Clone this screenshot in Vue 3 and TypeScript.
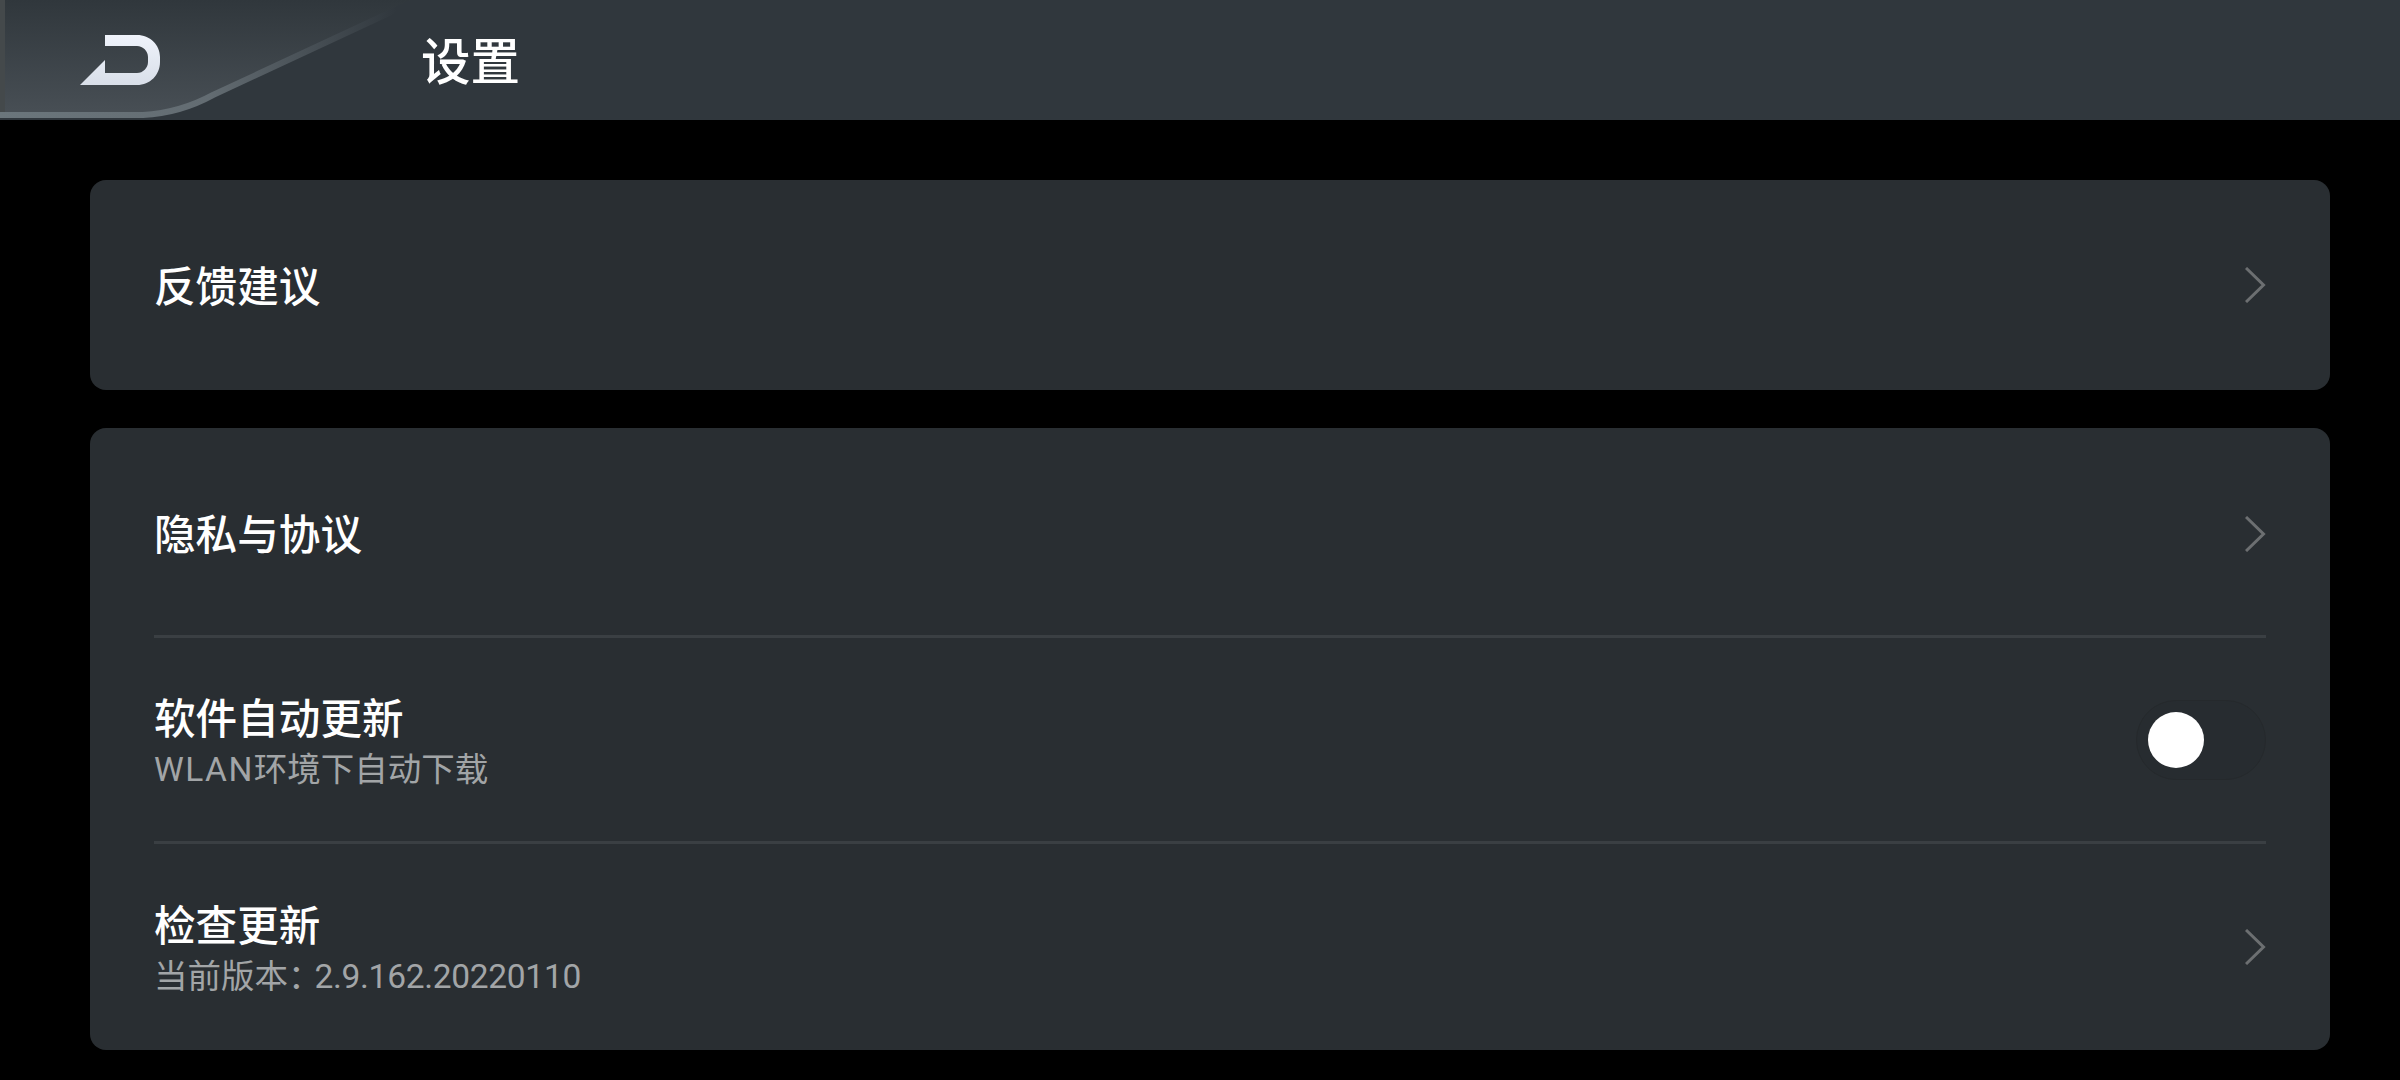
<script setup lang="ts">
interface SubPart {
  text: string;
  cls?: string;
}

interface Row {
  title: string;
  sub?: SubPart[];
  toggle?: boolean;
}

const feedback: Row[] = [{ title: '反馈建议' }];
const others: Row[] = [
  { title: '隐私与协议' },
  {
    title: '软件自动更新',
    sub: [{ text: 'WLAN', cls: 'wide' }, { text: '环境下自动下载' }],
    toggle: true,
  },
  {
    title: '检查更新',
    sub: [{ text: '当前版本' }, { text: '：', cls: 'colon' }, { text: '2.9.162.20220110', cls: 'tight' }],
  },
];
const groups = [feedback, others];
</script>

<template>
  <div class="page">
    <header class="topbar">
      <svg class="wedge" width="430" height="120" viewBox="0 0 430 120">
        <defs>
          <linearGradient id="wedgeFill" x1="0" y1="0" x2="0" y2="1">
            <stop offset="0" stop-color="#30373c" />
            <stop offset="1" stop-color="#484f55" />
          </linearGradient>
          <linearGradient id="wedgeLine" x1="0" y1="0" x2="1" y2="0">
            <stop offset="0" stop-color="#6b767c" />
            <stop offset="0.5" stop-color="#636c72" />
            <stop offset="0.95" stop-color="#30373d" />
          </linearGradient>
        </defs>
        <path d="M0 0H417L213 95Q180 113 143 115H0Z" fill="url(#wedgeFill)" />
        <rect x="0" y="0" width="5" height="112" fill="#44494b" />
        <path d="M0 115H143Q180 113 213 95L417 0" fill="none" stroke="url(#wedgeLine)" stroke-width="6" />
      </svg>
      <div class="back">
        <svg width="80" height="50" viewBox="80 33 80 50">
          <defs>
            <linearGradient id="logoFill" x1="0" y1="0" x2="0" y2="1">
              <stop offset="0" stop-color="#eff3fb" />
              <stop offset="1" stop-color="#d9dfe9" />
            </linearGradient>
          </defs>
          <path
            d="M105 33H137C150 33 160 43 160 55V60C160 73 150 83 137 83H80L105 58V71H137C143 71 148 66 148 60V55C148 49 143 44 137 44H105Z"
            fill="url(#logoFill)"
          />
        </svg>
      </div>
      <h1 class="title">设置</h1>
    </header>

    <main class="content">
      <section v-for="(group, g) in groups" :key="g" class="card">
        <div v-for="row in group" :key="row.title" class="row">
          <div class="labels">
            <div class="name">{{ row.title }}</div>
            <div v-if="row.sub" class="sub">
              <span v-for="part in row.sub" :key="part.text" :class="part.cls">{{ part.text }}</span>
            </div>
          </div>
          <div v-if="row.toggle" class="switch"><span class="knob"></span></div>
          <svg v-else class="chevron" width="21" height="36" viewBox="0 0 21 36">
            <path d="M1 1L18.5 18L1 35" fill="none" stroke="#6c6f71" stroke-width="3" />
          </svg>
        </div>
      </section>
    </main>
  </div>
</template>

<style>
html,
body {
  background: #000;
}
</style>

<style scoped>
.page {
  width: 2400px;
  height: 1080px;
  background: #000;
  overflow: hidden;
  font-family: Roboto, "Noto Sans CJK SC", sans-serif;
}

.topbar {
  position: relative;
  height: 120px;
  display: flex;
  align-items: center;
  background: #30373d;
}

.wedge {
  position: absolute;
  left: 0;
  top: 0;
}

.back {
  position: relative;
  width: 421px;
  padding-left: 80px;
  box-sizing: border-box;
  display: flex;
  align-items: center;
  height: 116px;
}

.title {
  position: relative;
  margin: 0 0 3px;
  font-size: 49.5px;
  font-weight: 500;
  color: #fff;
}

.content {
  padding: 60px 70px 0 90px;
  display: flex;
  flex-direction: column;
  gap: 38px;
}

.card {
  background: #292e32;
  border-radius: 16px;
  padding: 0 64px;
}

.row {
  min-height: 203px;
  display: flex;
  align-items: center;
  justify-content: space-between;
  border-top: 3px solid #3a3f43;
}

.row:first-child {
  border-top: none;
}

.card + .card .row:first-child {
  padding-top: 4px;
}

.row:last-child {
  min-height: 206px;
}

.card:first-child .row {
  min-height: 210px;
}

.labels {
  display: flex;
  flex-direction: column;
  padding-top: 8px;
}

.name {
  font-size: 41.6px;
  line-height: 50px;
  font-weight: 500;
  color: #fff;
}

.name:only-child {
  margin-top: -3px;
}

.sub {
  margin-top: 2px;
  font-size: 33.5px;
  line-height: 46px;
  color: #a2a5a7;
}

.wide {
  letter-spacing: 1.5px;
}

.colon {
  letter-spacing: -7px;
}

.tight {
  letter-spacing: -0.3px;
}

.switch {
  width: 130px;
  height: 80px;
  box-sizing: border-box;
  border: 1px solid #25292c;
  border-radius: 40px;
  background: #272c30;
  display: flex;
  align-items: center;
  padding-left: 11px;
}

.knob {
  width: 56px;
  height: 56px;
  border-radius: 50%;
  background: #fff;
}
</style>
